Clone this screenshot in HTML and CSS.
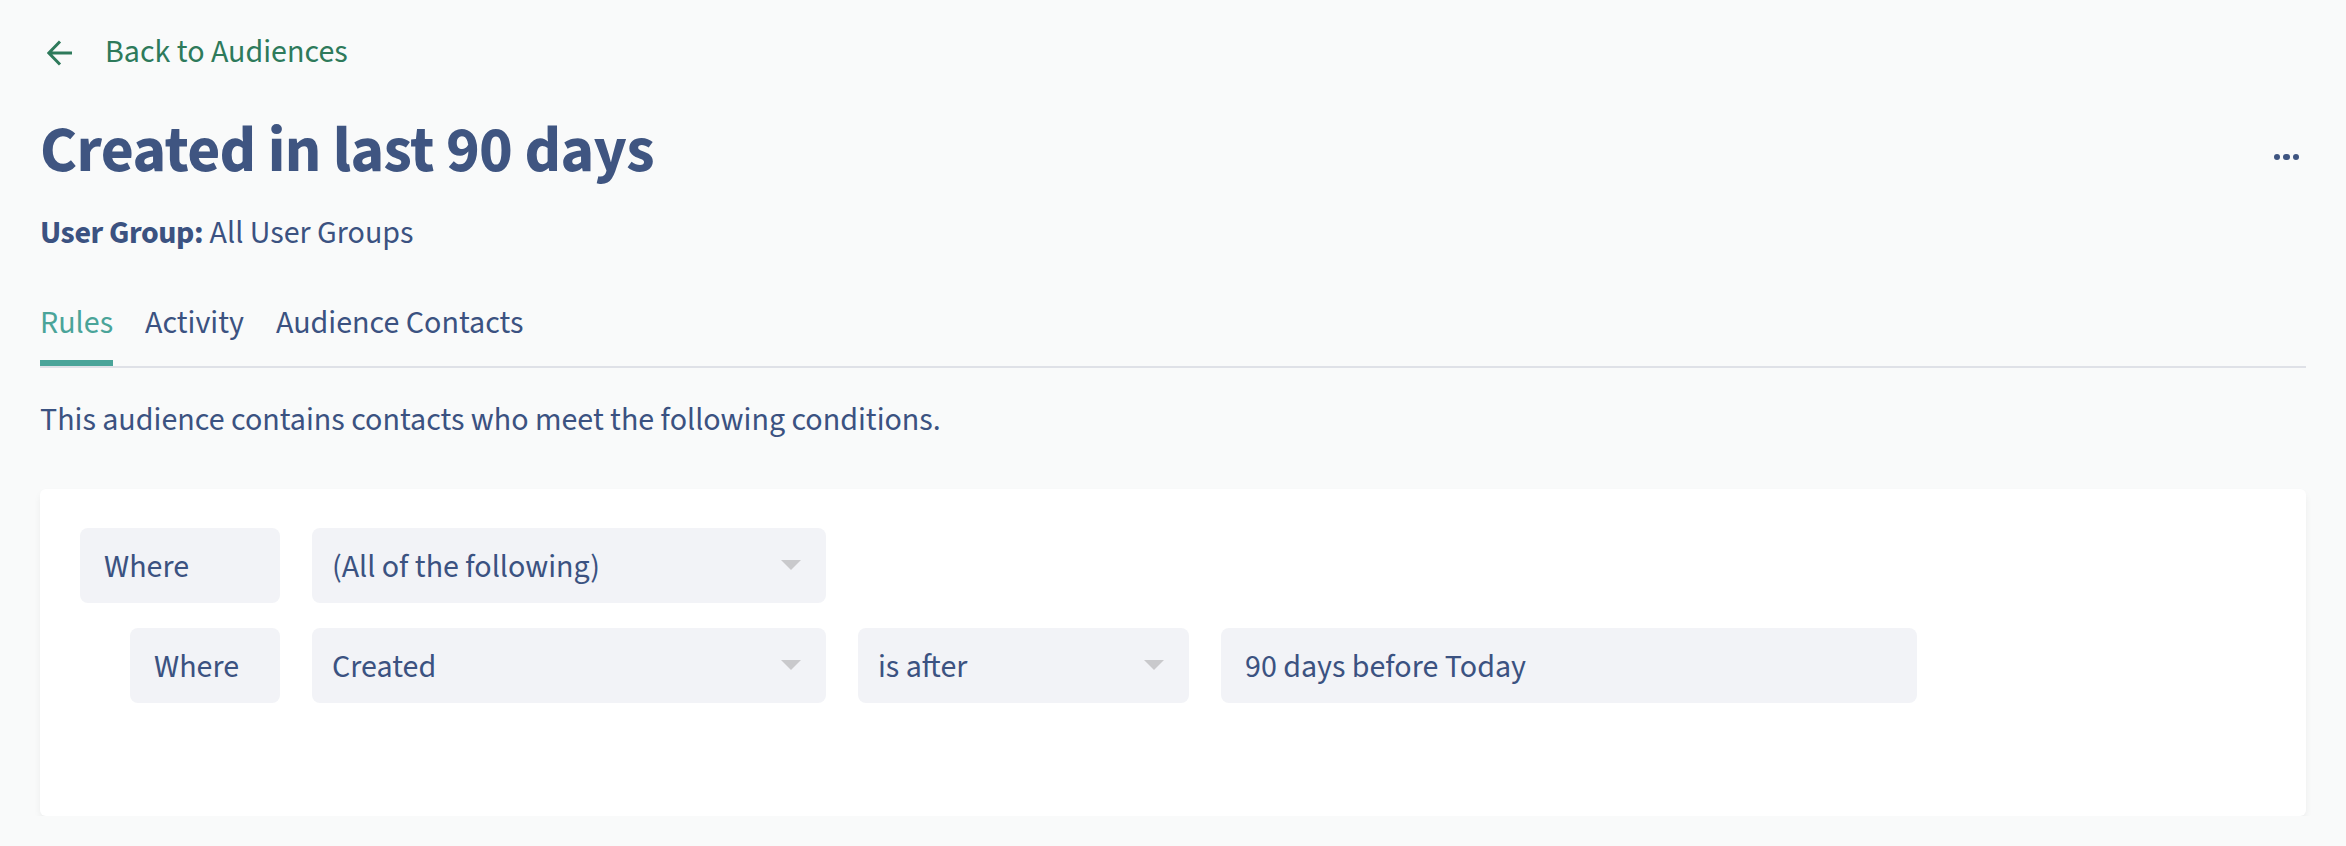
FILE: index.html
```html
<!DOCTYPE html>
<html lang="en">
<head>
<meta charset="utf-8">
<title>Created in last 90 days</title>
<link rel="stylesheet" href="styles.css">
</head>
<body>
<main class="page">
  <a class="back-link" href="#">
    <svg class="back-icon" viewBox="0 0 26 26" width="26" height="26" aria-hidden="true">
      <path d="M25 13H2.5M13 1.5L1.8 13L13 24.5" fill="none" stroke="currentColor" stroke-width="3"/>
    </svg>
    <span>Back to Audiences</span>
  </a>

  <header class="title-row">
    <h1 class="title">Created in last 90 days</h1>
    <button class="menu-btn" aria-label="More actions"><span class="dot"></span><span class="dot"></span><span class="dot"></span></button>
  </header>

  <p class="user-group"><strong>User Group:</strong> All User Groups</p>

  <nav class="tabs">
    <a class="tab active" href="#">Rules</a>
    <a class="tab" href="#">Activity</a>
    <a class="tab" href="#">Audience Contacts</a>
  </nav>

  <p class="desc">This audience contains contacts who meet the following conditions.</p>

  <section class="card">
    <div class="rule-row">
      <div class="label wide">Where</div>
      <div class="select field-main"><span>(All of the following)</span><i class="caret"></i></div>
    </div>
    <div class="rule-row">
      <div class="label-col"><div class="label narrow">Where</div></div>
      <div class="select field-main"><span>Created</span><i class="caret"></i></div>
      <div class="select field-op"><span>is after</span><i class="caret"></i></div>
      <div class="input field-value">90 days before Today</div>
    </div>
  </section>
</main>
</body>
</html>
```
FILE: styles.css
```css
* { box-sizing: border-box; }

html, body {
  margin: 0;
  background: #f9fafa;
}

body {
  font-family: "Source Sans 3", "Source Sans Pro", Lato, sans-serif;
  color: #3b5281;
  font-size: 32px;
  line-height: 48px;
}

.page {
  padding: 28px 40px 0 40px;
}

.back-link {
  display: inline-flex;
  align-items: center;
  gap: 32px;
  color: #2e7a5b;
  text-decoration: none;
  margin-left: 7px;
}

.back-icon {
  display: block;
  color: #2e7a5b;
  margin-top: 1px;
}

.title-row {
  display: flex;
  align-items: center;
  justify-content: space-between;
  margin-top: 31px;
}

.title {
  margin: 0;
  font-size: 64px;
  line-height: 80px;
  font-weight: 700;
  color: #3f5581;
  letter-spacing: -0.66px;
}

.menu-btn {
  display: flex;
  gap: 3px;
  background: none;
  border: 0;
  padding: 0;
  margin: 13px 7px 0 0;
  cursor: pointer;
}

.dot {
  width: 6.5px;
  height: 6.5px;
  border-radius: 50%;
  background: #3f5581;
}

.user-group {
  margin: 18px 0 0 0;
}

.user-group strong {
  font-weight: 700;
  letter-spacing: -0.4px;
}

.tabs {
  display: flex;
  gap: 32px;
  margin-top: 42px;
  border-bottom: 2px solid #dfe1e7;
}

.tab {
  color: #3b5281;
  text-decoration: none;
  padding-bottom: 13px;
  border-bottom: 6px solid transparent;
}

.tab.active {
  color: #4aa499;
  border-bottom-color: #4aa499;
}

.desc {
  margin: 28px 0 0 0;
}

.card {
  margin-top: 45px;
  background: #ffffff;
  border-radius: 6px;
  box-shadow: 0 4px 8px -2px rgba(0, 0, 0, 0.09);
  padding: 39px 40px 113px 40px;
  display: flex;
  flex-direction: column;
  gap: 25px;
}

.rule-row {
  display: flex;
  gap: 32px;
}

.label-col {
  width: 200px;
  display: flex;
  justify-content: flex-end;
}

.label, .select, .input {
  height: 75px;
  background: #f2f3f7;
  border-radius: 8px;
  padding: 15px 24px 12px 24px;
  white-space: nowrap;
}

.label.wide { width: 200px; }
.label.narrow { width: 150px; }

.select {
  display: flex;
  justify-content: space-between;
  padding-left: 20px;
  padding-right: 25px;
}

.field-main { width: 514px; }
.field-op { width: 331px; }
.field-value { width: 696px; }

.caret {
  align-self: center;
  width: 0;
  height: 0;
  margin-top: -3px;
  border-left: 10px solid transparent;
  border-right: 10px solid transparent;
  border-top: 10px solid #c9c9cc;
}
```
